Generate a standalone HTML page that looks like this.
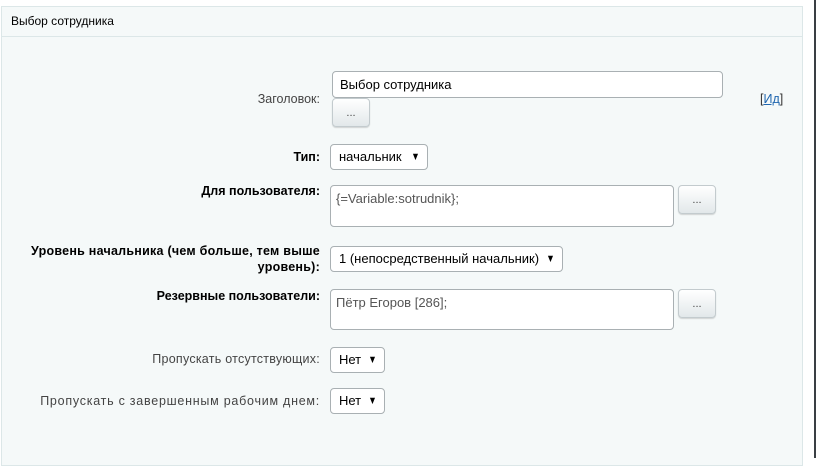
<!DOCTYPE html>
<html><head><meta charset="utf-8"><style>
*{box-sizing:border-box;margin:0;padding:0}
body{width:816px;height:458px;background:#fff;font-family:"Liberation Sans",Arial,sans-serif;position:relative;overflow:hidden;color:#000}
.panel{position:absolute;left:1px;top:6px;width:802px;height:460px;background:#f5f9f9;border:1px solid #dce7e8}
.hdr{position:absolute;left:1px;top:6px;width:802px;height:31px;border-bottom:1px solid #dce7e8;font-size:12px;padding:8px 0 0 10px;color:#000}
.edge{position:absolute;left:814px;top:0;width:2px;height:458px;background:#3a3f44}
.a{position:absolute;font-size:12.5px;white-space:nowrap}
.lbl{color:#444;text-align:right;right:496px}
.b{font-weight:bold;color:#000}
.inp{position:absolute;background:#fff;border:1px solid #a9b0b3;border-radius:4px;font-size:13px;padding:5px 7px;color:#000}
.ta{color:#555;padding:5px 5px}
.btn{position:absolute;border:1px solid #c3cbce;border-radius:4px;background:linear-gradient(#fff,#e2e8ea);box-shadow:0 1px 1px rgba(0,0,0,.15);font-size:11px;text-align:center;color:#444;line-height:22px}
.sel{position:absolute;background:#fff;border:1px solid #a9b0b3;border-radius:4px;font-size:13px;padding:5px 8px;color:#000;line-height:14px}
.sel:after{content:"▼";position:absolute;right:6px;top:5px;font-size:11px;transform:scaleX(.8)}
</style></head><body>
<div class="panel"></div>
<div class="hdr">Выбор сотрудника</div>
<div class="edge"></div>

<div class="a lbl" style="top:92px">Заголовок:</div>
<div class="inp" style="left:332px;top:71px;width:391px;height:27px">Выбор сотрудника</div>
<div class="btn" style="left:332px;top:98px;width:38px;height:29px;line-height:28px">...</div>
<div class="a" style="left:760px;top:92px;color:#333">[<span style="color:#2067b0;text-decoration:underline">Ид</span>]</div>

<div class="a lbl b" style="top:150px">Тип:</div>
<div class="sel" style="left:330px;top:144px;width:98px;height:26px">начальник</div>

<div class="a lbl b" style="top:184px">Для пользователя:</div>
<div class="inp ta" style="left:330px;top:185px;width:344px;height:42px">{=Variable:sotrudnik};</div>
<div class="btn" style="left:678px;top:185px;width:38px;height:29px;line-height:28px">...</div>

<div class="a lbl b" style="top:243px;line-height:16px;letter-spacing:.25px">Уровень начальника (чем больше, тем выше<br>уровень):</div>
<div class="sel" style="left:330px;top:246px;width:233px;height:26px">1 (непосредственный начальник)</div>

<div class="a lbl b" style="top:289px">Резервные пользователи:</div>
<div class="inp ta" style="left:330px;top:289px;width:344px;height:41px">Пётр Егоров [286];</div>
<div class="btn" style="left:678px;top:289px;width:38px;height:29px;line-height:28px">...</div>

<div class="a lbl" style="top:352px;letter-spacing:.25px">Пропускать отсутствующих:</div>
<div class="sel" style="left:330px;top:347px;width:55px;height:26px">Нет</div>

<div class="a lbl" style="top:394px;letter-spacing:.75px">Пропускать с завершенным рабочим днем:</div>
<div class="sel" style="left:330px;top:388px;width:55px;height:26px">Нет</div>
</body></html>
